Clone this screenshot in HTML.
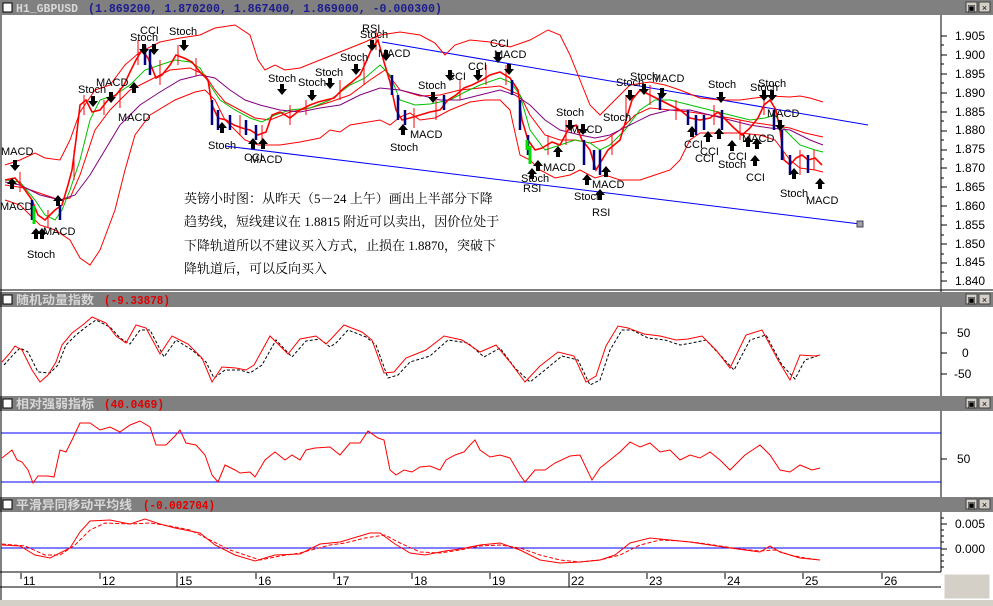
<!DOCTYPE html>
<html><head><meta charset="utf-8"><style>
html,body{margin:0;padding:0;background:#d4d0c8;}
body{width:993px;height:606px;overflow:hidden;position:relative;font-family:"Liberation Sans",sans-serif;}
svg{position:absolute;left:0;top:0;}
.tb{font-family:"Liberation Mono","Noto Sans CJK SC",monospace;font-weight:bold;font-size:12px;}
.ax{font-family:"Liberation Sans",sans-serif;font-size:12px;fill:#000;}
.lb{font-family:"Liberation Sans",sans-serif;font-size:11px;fill:#000;}
.cn{font-family:"Liberation Serif","Noto Serif CJK SC",serif;font-size:13px;fill:#000;}
</style></head><body>
<svg width="993" height="606" viewBox="0 0 993 606" xmlns="http://www.w3.org/2000/svg">
<rect x="0" y="0" width="993" height="606" fill="#fff"/>
<rect x="0" y="600" width="993" height="6" fill="#d4d0c8"/>
<g>
<rect x="0" y="0" width="993" height="15" fill="#808080"/>
<rect x="0" y="292" width="993" height="15" fill="#808080"/>
<rect x="0" y="396" width="993" height="15" fill="#808080"/>
<rect x="0" y="497" width="993" height="15" fill="#808080"/>
<g fill="#fff" stroke="#000"><rect x="3" y="3" width="9" height="9"/><rect x="3" y="295" width="9" height="9"/><rect x="3" y="399" width="9" height="9"/><rect x="3" y="500" width="9" height="9"/></g>
<g fill="#d4d0c8" stroke="#404040"><rect x="966" y="2" width="11" height="10"/><rect x="979" y="2" width="11" height="10"/><rect x="966" y="294" width="11" height="10"/><rect x="979" y="294" width="11" height="10"/><rect x="966" y="398" width="11" height="10"/><rect x="979" y="398" width="11" height="10"/><rect x="966" y="499" width="11" height="10"/><rect x="979" y="499" width="11" height="10"/></g>
<g font-size="9" font-family="Liberation Sans" text-anchor="middle"><text x="971.5" y="11">▣</text><text x="984.5" y="11">×</text><text x="971.5" y="303">▣</text><text x="984.5" y="303">×</text><text x="971.5" y="407">▣</text><text x="984.5" y="407">×</text><text x="971.5" y="508">▣</text><text x="984.5" y="508">×</text></g>
<text class="tb" x="16" y="12" fill="#d8d8d8" textLength="62" lengthAdjust="spacingAndGlyphs">H1_GBPUSD</text><text class="tb" x="88" y="12" fill="#1c1c90" textLength="354" lengthAdjust="spacingAndGlyphs">(1.869200, 1.870200, 1.867400, 1.869000, -0.000300)</text>
<text class="tb" x="16" y="304" fill="#d8d8d8" textLength="78" lengthAdjust="spacingAndGlyphs">随机动量指数</text><text class="tb" x="104" y="304" fill="#e00000" textLength="66" lengthAdjust="spacingAndGlyphs">(-9.33878)</text>
<text class="tb" x="16" y="408" fill="#d8d8d8" textLength="78" lengthAdjust="spacingAndGlyphs">相对强弱指标</text><text class="tb" x="104" y="408" fill="#e00000" textLength="60" lengthAdjust="spacingAndGlyphs">(40.0469)</text>
<text class="tb" x="16" y="509" fill="#d8d8d8" textLength="116" lengthAdjust="spacingAndGlyphs">平滑异同移动平均线</text><text class="tb" x="143" y="509" fill="#e00000" textLength="72" lengthAdjust="spacingAndGlyphs">(-0.002704)</text>
</g>
<g stroke="#000" fill="none">
<line x1="1" y1="15" x2="1" y2="600"/>
<line x1="941" y1="15" x2="941" y2="292"/><line x1="941" y1="307" x2="941" y2="396"/><line x1="941" y1="411" x2="941" y2="497"/><line x1="941" y1="512" x2="941" y2="572"/>
<line x1="0" y1="572" x2="941" y2="572"/><line x1="0" y1="587" x2="941" y2="587"/>
<line x1="0" y1="290" x2="993" y2="290"/>
</g>
<rect x="944" y="574" width="46" height="25" fill="#d4d0c8" stroke="#fff"/>
<g class="ax">
<text x="955" y="40">1.905</text><text x="955" y="59">1.900</text><text x="955" y="78">1.895</text><text x="955" y="97">1.890</text><text x="955" y="116">1.885</text><text x="955" y="134">1.880</text><text x="955" y="153">1.875</text><text x="955" y="172">1.870</text><text x="955" y="191">1.865</text><text x="955" y="210">1.860</text><text x="955" y="229">1.855</text><text x="955" y="248">1.850</text><text x="955" y="266">1.845</text><text x="955" y="285">1.840</text>
<text x="957" y="337">50</text><text x="962" y="357">0</text><text x="954" y="378">-50</text>
<text x="957" y="463">50</text>
<text x="955" y="528">0.005</text><text x="955" y="553">0.000</text>
</g>
<g stroke="#000">
<path d="M941 36h6M941 55h6M941 74h6M941 93h6M941 112h6M941 131h6M941 150h6M941 168h6M941 187h6M941 206h6M941 225h6M941 244h6M941 263h6M941 281h6M941 45h3M941 64h3M941 83h3M941 102h3M941 121h3M941 140h3M941 159h3M941 178h3M941 197h3M941 216h3M941 235h3M941 254h3M941 272h3"/>
<path d="M941 333h6M941 353h6M941 374h6M941 459h6M941 524h6M941 549h6M941 518h3M941 530h3M941 536h3M941 542h3M941 555h3M941 561h3M941 567h3"/>
</g>
<g stroke="#000"><path d="M21 573v6M100 573v6M177 573v14M256 573v6M334 573v6M412 573v6M490 573v6M569 573v14M647 573v6M725 573v6M803 573v6M882 573v6"/></g>
<g class="ax"><text x="23" y="585">11</text><text x="102" y="585">12</text><text x="179" y="585">15</text><text x="258" y="585">16</text><text x="336" y="585">17</text><text x="414" y="585">18</text><text x="492" y="585">19</text><text x="571" y="585">22</text><text x="649" y="585">23</text><text x="727" y="585">24</text><text x="805" y="585">25</text><text x="884" y="585">26</text></g>

<g fill="none" stroke-width="1">
<line x1="382" y1="42" x2="868" y2="125" stroke="#0000ff"/>
<line x1="225" y1="146" x2="860" y2="224" stroke="#0000ff"/>
<rect x="857" y="221" width="6" height="6" fill="#a0a0a0" stroke="#404060"/>
<polyline stroke="#ff0000" points="5,165 20,160 35,153 45,158 60,160 70,140 80,112 95,90 110,85 125,65 140,52 160,42 180,38 200,35 215,28 235,25 250,35 258,60 265,70 275,65 285,70 300,68 320,60 345,50 365,42 380,35 400,32 420,35 435,43 445,55 455,45 470,40 490,42 510,47 530,40 548,30 560,35 570,55 580,80 590,105 600,115 615,100 630,85 650,82 665,85 680,90 700,98 720,100 740,100 755,98 770,96 790,97 800,96 810,98 823,102"/>
<polyline stroke="#ff0000" points="5,200 20,205 30,215 40,225 55,230 70,240 80,258 90,265 100,250 115,210 125,170 135,135 150,115 175,100 195,92 205,90 215,100 225,120 245,140 258,145 280,145 300,142 320,138 330,130 340,132 350,125 380,120 390,125 400,117 410,113 420,120 435,118 450,110 470,102 485,100 500,100 510,110 520,155 530,160 540,170 555,178 570,175 580,170 595,178 605,175 620,180 640,180 655,175 670,170 680,160 690,140 700,133 725,133 740,133 760,135 775,140 790,160 800,168 815,170 823,172"/>
<polyline stroke="#ff0000" points="5,185 25,188 45,195 60,200 70,198 80,175 95,130 110,110 130,90 150,80 170,70 190,68 205,75 215,90 225,102 240,110 255,118 270,120 290,112 310,108 330,102 350,95 370,80 385,70 400,90 420,96 440,95 460,90 480,88 500,86 520,95 530,115 545,135 560,140 575,140 590,143 605,140 620,130 635,115 650,108 670,110 690,112 710,115 730,118 750,122 770,125 790,128 805,133 823,137"/>
<polyline stroke="#00c000" points="5,180 20,182 35,200 45,215 55,220 62,210 70,190 80,160 90,120 100,100 115,95 130,85 145,70 160,65 175,60 190,62 200,68 210,85 220,100 235,110 250,118 262,122 275,115 290,110 310,108 330,100 350,85 365,78 380,65 390,75 400,100 415,105 430,104 450,100 465,92 480,85 500,78 510,82 520,95 530,130 545,150 560,145 575,140 590,143 600,150 610,145 625,130 640,110 655,100 670,100 690,105 710,110 730,115 750,120 765,118 775,115 785,130 800,145 815,150 823,152"/>
<polyline stroke="#800080" points="5,182 20,185 40,195 60,200 75,195 90,175 105,150 120,125 140,105 160,92 180,80 200,75 215,78 230,90 245,100 260,105 280,110 300,112 320,108 340,105 360,95 380,88 400,90 420,95 440,100 460,100 480,95 500,90 515,95 530,105 545,120 560,130 580,135 595,138 610,135 630,125 650,115 670,110 690,110 710,115 730,120 750,125 770,128 790,130 810,140 823,145"/>
<polyline stroke="#ff0000" stroke-width="1.6" points="5,180 15,178 25,190 32,200 38,215 45,220 55,210 62,205 68,185 72,170 76,140 80,105 86,100 92,112 100,110 108,100 116,95 124,85 130,72 136,60 142,50 148,58 156,78 162,75 170,65 176,55 184,58 192,62 200,72 208,80 212,105 218,118 226,120 234,125 242,128 250,130 258,135 266,132 272,115 280,112 290,118 300,110 310,105 318,102 326,100 334,98 344,88 352,82 360,75 366,62 372,48 378,40 384,62 390,82 396,110 402,120 410,118 420,115 430,112 440,110 448,100 456,95 464,88 472,85 482,80 490,75 500,72 510,78 518,90 522,120 528,140 535,150 542,148 552,142 560,145 568,130 576,125 582,140 590,150 596,170 602,160 608,150 614,145 620,140 626,120 632,100 640,90 650,95 660,100 670,105 680,110 690,118 700,120 710,118 718,112 726,120 734,128 742,135 750,128 758,118 764,105 770,100 776,110 780,130 784,160 790,165 796,158 802,155 808,160 815,158 822,165"/>
<g stroke="#ff0000" stroke-width="1"><path d="M20 172v20M48 210v18M74 150v30M84 95v20M104 100v15M120 88v20M138 40v25M160 60v25M178 45v20M196 58v18M240 115v20M262 125v18M290 105v20M306 100v15M340 80v20M364 60v25M376 30v20M414 108v20M436 100v20M460 80v20M486 65v20M506 65v20M548 135v20M566 120v25M612 135v20M626 95v30M650 85v20M676 100v20M714 105v20M740 120v20M764 95v20M800 150v25M814 150v20"/></g>
<g stroke="#000080" stroke-width="2.5">
<path d="M32 200v20M60 205v15M145 45v20M212 100v25M230 115v15M246 120v15M392 75v20M405 110v15M520 100v30M528 135v20M584 140v25M600 150v25M688 110v15M704 115v15M782 130v30M790 155v20M150 50v25M218 110v20M256 125v15M398 95v25M444 95v15M512 80v15M594 150v20M660 95v15M696 115v20M722 110v20M774 110v20M808 155v18"/>
</g>
<g stroke="#00e000" stroke-width="3"><path d="M34 206v18M527 140v10M530 146v18"/></g>
</g>
<g class="lb">
<text x="1" y="155">MACD</text><text x="0" y="210">MACD</text><text x="43" y="235">MACD</text><text x="27" y="258">Stoch</text>
<text x="78" y="93">Stoch</text><text x="96" y="86">MACD</text><text x="118" y="121">MACD</text>
<text x="130" y="41">Stoch</text><text x="140" y="34">CCI</text><text x="169" y="35">Stoch</text>
<text x="268" y="82">Stoch</text><text x="298" y="86">Stoch</text><text x="315" y="76">Stoch</text><text x="340" y="61">Stoch</text><text x="362" y="32">RSI</text><text x="360" y="38">Stoch</text><text x="378" y="57">MACD</text>
<text x="208" y="149">Stoch</text><text x="244" y="161">CCI</text><text x="250" y="163">MACD</text>
<text x="390" y="151">Stoch</text><text x="410" y="138">MACD</text><text x="418" y="89">Stoch</text><text x="447" y="80">CCI</text><text x="468" y="70">CCI</text><text x="490" y="47">CCI</text><text x="494" y="58">MACD</text>
<text x="556" y="116">Stoch</text><text x="570" y="133">MACD</text><text x="543" y="171">MACD</text><text x="521" y="182">Stoch</text><text x="523" y="192">RSI</text><text x="574" y="200">Stoch</text><text x="592" y="216">RSI</text><text x="592" y="188">MACD</text>
<text x="603" y="121">Stoch</text><text x="616" y="86">Stoch</text><text x="630" y="80">Stoch</text><text x="652" y="82">MACD</text>
<text x="708" y="88">Stoch</text><text x="684" y="148">CCI</text><text x="700" y="155">CCI</text><text x="695" y="162">CCI</text><text x="718" y="168">Stoch</text><text x="728" y="160">CCI</text><text x="742" y="142">MACD</text><text x="746" y="181">CCI</text>
<text x="750" y="91">Stoch</text><text x="758" y="87">Stoch</text><text x="767" y="117">MACD</text>
<text x="780" y="197">Stoch</text><text x="806" y="204">MACD</text>
</g>
<g fill="#000">
<path d="M-2 0h4v5h3l-5 6-5-6h3z" transform="translate(15,160)"/>
<path d="M-2 0h4v5h3l-5 6-5-6h3z" transform="translate(93,96)"/>
<path d="M-2 0h4v5h3l-5 6-5-6h3z" transform="translate(111,92)"/>
<path d="M-2 0h4v5h3l-5 6-5-6h3z" transform="translate(144,44)"/>
<path d="M-2 0h4v5h3l-5 6-5-6h3z" transform="translate(154,44)"/>
<path d="M-2 0h4v5h3l-5 6-5-6h3z" transform="translate(184,40)"/>
<path d="M-2 0h4v5h3l-5 6-5-6h3z" transform="translate(282,84)"/>
<path d="M-2 0h4v5h3l-5 6-5-6h3z" transform="translate(312,90)"/>
<path d="M-2 0h4v5h3l-5 6-5-6h3z" transform="translate(330,78)"/>
<path d="M-2 0h4v5h3l-5 6-5-6h3z" transform="translate(356,64)"/>
<path d="M-2 0h4v5h3l-5 6-5-6h3z" transform="translate(372,40)"/>
<path d="M-2 0h4v5h3l-5 6-5-6h3z" transform="translate(386,50)"/>
<path d="M-2 0h4v5h3l-5 6-5-6h3z" transform="translate(433,92)"/>
<path d="M-2 0h4v5h3l-5 6-5-6h3z" transform="translate(450,70)"/>
<path d="M-2 0h4v5h3l-5 6-5-6h3z" transform="translate(478,70)"/>
<path d="M-2 0h4v5h3l-5 6-5-6h3z" transform="translate(498,52)"/>
<path d="M-2 0h4v5h3l-5 6-5-6h3z" transform="translate(509,64)"/>
<path d="M-2 0h4v5h3l-5 6-5-6h3z" transform="translate(570,120)"/>
<path d="M-2 0h4v5h3l-5 6-5-6h3z" transform="translate(583,124)"/>
<path d="M-2 0h4v5h3l-5 6-5-6h3z" transform="translate(630,90)"/>
<path d="M-2 0h4v5h3l-5 6-5-6h3z" transform="translate(644,84)"/>
<path d="M-2 0h4v5h3l-5 6-5-6h3z" transform="translate(662,88)"/>
<path d="M-2 0h4v5h3l-5 6-5-6h3z" transform="translate(721,92)"/>
<path d="M-2 0h4v5h3l-5 6-5-6h3z" transform="translate(764,90)"/>
<path d="M-2 0h4v5h3l-5 6-5-6h3z" transform="translate(772,90)"/>
<path d="M-2 0h4v5h3l-5 6-5-6h3z" transform="translate(780,120)"/>
</g>
<g fill="#000">
<path d="M-2 11h4v-5h3l-5-6-5 6h3z" transform="translate(12,178)"/>
<path d="M-2 11h4v-5h3l-5-6-5 6h3z" transform="translate(36,228)"/>
<path d="M-2 11h4v-5h3l-5-6-5 6h3z" transform="translate(42,228)"/>
<path d="M-2 11h4v-5h3l-5-6-5 6h3z" transform="translate(58,195)"/>
<path d="M-2 11h4v-5h3l-5-6-5 6h3z" transform="translate(134,82)"/>
<path d="M-2 11h4v-5h3l-5-6-5 6h3z" transform="translate(222,122)"/>
<path d="M-2 11h4v-5h3l-5-6-5 6h3z" transform="translate(253,138)"/>
<path d="M-2 11h4v-5h3l-5-6-5 6h3z" transform="translate(263,138)"/>
<path d="M-2 11h4v-5h3l-5-6-5 6h3z" transform="translate(403,124)"/>
<path d="M-2 11h4v-5h3l-5-6-5 6h3z" transform="translate(532,168)"/>
<path d="M-2 11h4v-5h3l-5-6-5 6h3z" transform="translate(538,160)"/>
<path d="M-2 11h4v-5h3l-5-6-5 6h3z" transform="translate(558,146)"/>
<path d="M-2 11h4v-5h3l-5-6-5 6h3z" transform="translate(587,174)"/>
<path d="M-2 11h4v-5h3l-5-6-5 6h3z" transform="translate(600,189)"/>
<path d="M-2 11h4v-5h3l-5-6-5 6h3z" transform="translate(606,166)"/>
<path d="M-2 11h4v-5h3l-5-6-5 6h3z" transform="translate(692,126)"/>
<path d="M-2 11h4v-5h3l-5-6-5 6h3z" transform="translate(708,131)"/>
<path d="M-2 11h4v-5h3l-5-6-5 6h3z" transform="translate(719,128)"/>
<path d="M-2 11h4v-5h3l-5-6-5 6h3z" transform="translate(732,140)"/>
<path d="M-2 11h4v-5h3l-5-6-5 6h3z" transform="translate(748,136)"/>
<path d="M-2 11h4v-5h3l-5-6-5 6h3z" transform="translate(755,155)"/>
<path d="M-2 11h4v-5h3l-5-6-5 6h3z" transform="translate(757,138)"/>
<path d="M-2 11h4v-5h3l-5-6-5 6h3z" transform="translate(794,168)"/>
<path d="M-2 11h4v-5h3l-5-6-5 6h3z" transform="translate(820,178)"/>
</g>
<g class="cn">
<text x="184" y="203">英镑小时图：从昨天（5－24 上午）画出上半部分下降</text>
<text x="184" y="226">趋势线，短线建议在 1.8815 附近可以卖出，因价位处于</text>
<text x="184" y="250">下降轨道所以不建议买入方式，止损在 1.8870，突破下</text>
<text x="184" y="273">降轨道后，可以反向买入</text>
</g>

<polyline fill="none" stroke="#000" stroke-dasharray="3,2" points="4,365 13,355 20,348 28,352 38,372 50,373 58,365 66,345 76,335 86,327 96,320 110,327 120,338 130,344 140,330 150,330 164,357 176,340 192,350 206,362 214,378 225,370 240,370 250,373 262,365 276,340 292,357 306,341 320,339 330,347 336,343 348,330 366,337 376,345 388,378 398,375 410,362 430,356 448,340 468,343 484,357 500,348 515,368 530,382 545,370 562,356 578,360 590,385 600,380 610,350 622,330 632,330 648,338 665,340 680,345 692,343 706,340 720,355 734,370 750,340 766,335 782,365 795,379 805,360 820,355"/>
<polyline fill="none" stroke="#ff0000" points="2,362 10,353 15,346 22,350 32,370 40,382 48,375 56,362 62,345 72,333 84,324 92,317 106,323 116,336 126,343 136,325 146,328 160,354 172,336 188,344 202,358 212,382 222,367 236,368 246,370 254,365 270,336 288,354 300,339 316,336 326,344 332,338 344,325 362,332 372,340 384,373 394,372 406,358 426,350 444,336 462,340 480,352 496,345 510,362 525,382 540,366 558,352 574,356 586,382 596,376 606,346 618,326 628,328 644,334 660,336 676,340 688,339 702,336 716,350 730,368 746,335 762,330 778,360 790,380 800,355 815,356 820,355"/>

<line x1="1" y1="433" x2="941" y2="433" stroke="#0000ff"/>
<line x1="1" y1="482" x2="941" y2="482" stroke="#0000ff"/>
<polyline fill="none" stroke="#ff0000" points="2,458 12,450 17,460 22,462 28,470 33,483 38,476 48,476 54,477 60,450 66,452 72,440 80,423 90,423 100,430 110,427 120,432 130,425 140,421 150,427 156,445 166,445 175,436 180,430 186,443 196,445 205,455 212,475 218,482 225,465 235,470 240,473 250,472 255,477 265,460 275,452 285,460 292,455 300,460 306,450 315,448 330,447 340,455 350,443 360,443 368,431 378,438 384,440 390,470 396,475 404,470 412,472 420,467 430,466 440,470 446,460 455,455 464,452 470,445 475,440 480,450 490,457 500,455 510,458 520,475 525,482 535,470 545,470 555,463 570,456 580,455 592,480 600,468 610,460 620,452 630,442 640,447 650,443 660,452 670,450 680,460 690,455 700,458 710,452 720,460 730,470 745,455 760,445 770,455 780,470 790,472 800,465 812,470 820,468"/>

<line x1="1" y1="548" x2="941" y2="548" stroke="#0000ff"/>
<polyline fill="none" stroke="#ff0000" points="2,545 20,546 35,555 50,558 70,548 80,532 90,521 110,520 130,524 145,519 160,524 175,528 200,533 215,545 235,555 255,561 275,555 300,554 320,544 340,542 360,536 370,533 380,533 395,544 410,553 425,555 445,551 460,549 480,545 500,543 520,550 540,560 560,563 580,562 600,560 615,555 630,543 650,538 670,540 690,542 710,545 730,548 745,550 760,552 770,546 780,552 800,558 820,560"/>
<polyline fill="none" stroke="#ff0000" stroke-dasharray="4,2" points="2,544 25,546 45,555 60,555 75,545 90,530 105,523 130,524 150,523 170,526 190,530 210,540 230,550 260,560 280,556 300,553 330,545 345,543 365,538 385,535 400,543 420,552 440,553 460,550 480,546 500,545 520,548 540,555 560,560 580,562 600,560 620,555 640,545 660,540 680,541 700,543 720,546 740,549 760,551 775,550 790,555 805,558 820,560"/>
</svg>
</body></html>
